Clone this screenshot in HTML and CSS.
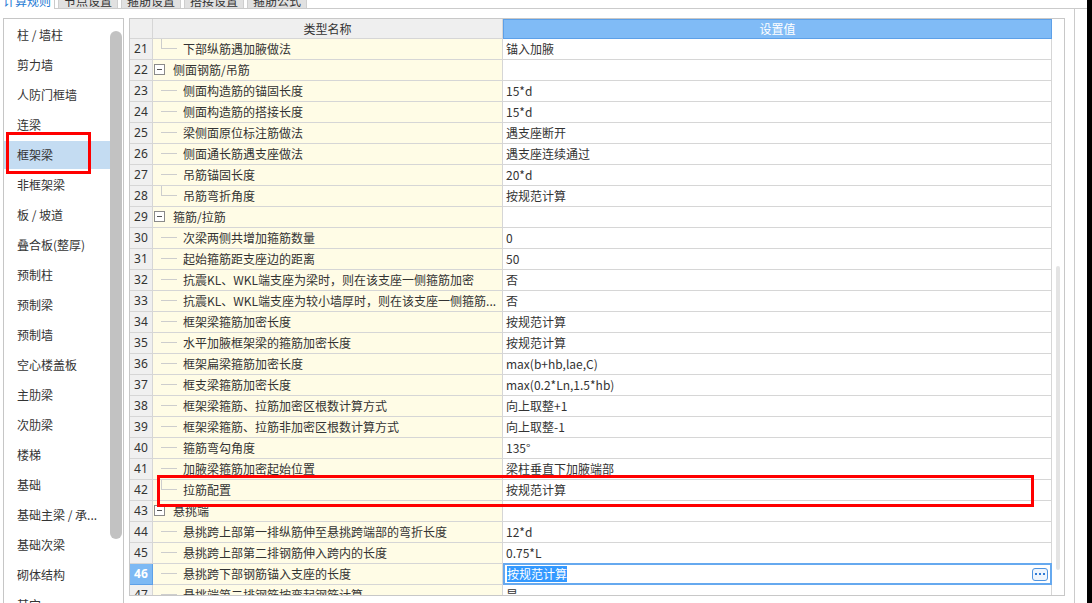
FILE: index.html
```html
<!DOCTYPE html>
<html lang="zh-CN">
<head>
<meta charset="utf-8">
<title>计算规则</title>
<link rel="stylesheet" href="styles.css">
</head>
<body>
<div class="app">
  <div class="main">
    <div class="tabs">
      <div class="tab active">计算规则</div>
      <div class="tab">节点设置</div>
      <div class="tab">箍筋设置</div>
      <div class="tab">搭接设置</div>
      <div class="tab">箍筋公式</div>
    </div>
    <div class="panel">
      <div class="sidebar">
        <ul class="list">
          <li class="item">柱 / 墙柱</li>
          <li class="item">剪力墙</li>
          <li class="item">人防门框墙</li>
          <li class="item">连梁</li>
          <li class="item selected">框架梁</li>
          <li class="item">非框架梁</li>
          <li class="item">板 / 坡道</li>
          <li class="item">叠合板(整厚)</li>
          <li class="item">预制柱</li>
          <li class="item">预制梁</li>
          <li class="item">预制墙</li>
          <li class="item">空心楼盖板</li>
          <li class="item">主肋梁</li>
          <li class="item">次肋梁</li>
          <li class="item">楼梯</li>
          <li class="item">基础</li>
          <li class="item">基础主梁 / 承...</li>
          <li class="item">基础次梁</li>
          <li class="item">砌体结构</li>
          <li class="item">其它</li>
        </ul>
        <div class="vtrack"><div class="vthumb"></div></div>
        <div class="mark mark-side"></div>
      </div>

      <div class="grid">
        <div class="table">
          <div class="row head">
            <div class="num"></div>
            <div class="name hname">类型名称</div>
            <div class="val hval">设置值</div>
          </div>
          <div class="row"><div class="num">21</div><div class="name"><span class="tree last"></span><span class="txt">下部纵筋遇加腋做法</span></div><div class="val">锚入加腋</div></div>
          <div class="row"><div class="num">22</div><div class="name"><span class="box"></span><span class="txt">侧面钢筋/吊筋</span></div><div class="val"></div></div>
          <div class="row"><div class="num">23</div><div class="name"><span class="tree"></span><span class="txt">侧面构造筋的锚固长度</span></div><div class="val">15*d</div></div>
          <div class="row"><div class="num">24</div><div class="name"><span class="tree"></span><span class="txt">侧面构造筋的搭接长度</span></div><div class="val">15*d</div></div>
          <div class="row"><div class="num">25</div><div class="name"><span class="tree"></span><span class="txt">梁侧面原位标注筋做法</span></div><div class="val">遇支座断开</div></div>
          <div class="row"><div class="num">26</div><div class="name"><span class="tree"></span><span class="txt">侧面通长筋遇支座做法</span></div><div class="val">遇支座连续通过</div></div>
          <div class="row"><div class="num">27</div><div class="name"><span class="tree"></span><span class="txt">吊筋锚固长度</span></div><div class="val">20*d</div></div>
          <div class="row"><div class="num">28</div><div class="name"><span class="tree last"></span><span class="txt">吊筋弯折角度</span></div><div class="val">按规范计算</div></div>
          <div class="row"><div class="num">29</div><div class="name"><span class="box"></span><span class="txt">箍筋/拉筋</span></div><div class="val"></div></div>
          <div class="row"><div class="num">30</div><div class="name"><span class="tree"></span><span class="txt">次梁两侧共增加箍筋数量</span></div><div class="val">0</div></div>
          <div class="row"><div class="num">31</div><div class="name"><span class="tree"></span><span class="txt">起始箍筋距支座边的距离</span></div><div class="val">50</div></div>
          <div class="row"><div class="num">32</div><div class="name"><span class="tree"></span><span class="txt">抗震KL、WKL端支座为梁时，则在该支座一侧箍筋加密</span></div><div class="val">否</div></div>
          <div class="row"><div class="num">33</div><div class="name"><span class="tree"></span><span class="txt">抗震KL、WKL端支座为较小墙厚时，则在该支座一侧箍筋...</span></div><div class="val">否</div></div>
          <div class="row"><div class="num">34</div><div class="name"><span class="tree"></span><span class="txt">框架梁箍筋加密长度</span></div><div class="val">按规范计算</div></div>
          <div class="row"><div class="num">35</div><div class="name"><span class="tree"></span><span class="txt">水平加腋框架梁的箍筋加密长度</span></div><div class="val">按规范计算</div></div>
          <div class="row"><div class="num">36</div><div class="name"><span class="tree"></span><span class="txt">框架扁梁箍筋加密长度</span></div><div class="val">max(b+hb,lae,C)</div></div>
          <div class="row"><div class="num">37</div><div class="name"><span class="tree"></span><span class="txt">框支梁箍筋加密长度</span></div><div class="val">max(0.2*Ln,1.5*hb)</div></div>
          <div class="row"><div class="num">38</div><div class="name"><span class="tree"></span><span class="txt">框架梁箍筋、拉筋加密区根数计算方式</span></div><div class="val">向上取整+1</div></div>
          <div class="row"><div class="num">39</div><div class="name"><span class="tree"></span><span class="txt">框架梁箍筋、拉筋非加密区根数计算方式</span></div><div class="val">向上取整-1</div></div>
          <div class="row"><div class="num">40</div><div class="name"><span class="tree"></span><span class="txt">箍筋弯勾角度</span></div><div class="val">135°</div></div>
          <div class="row"><div class="num">41</div><div class="name"><span class="tree"></span><span class="txt">加腋梁箍筋加密起始位置</span></div><div class="val">梁柱垂直下加腋端部</div></div>
          <div class="row"><div class="num">42</div><div class="name"><span class="tree last"></span><span class="txt">拉筋配置</span></div><div class="val">按规范计算</div></div>
          <div class="row"><div class="num">43</div><div class="name"><span class="box"></span><span class="txt">悬挑端</span></div><div class="val"></div></div>
          <div class="row"><div class="num">44</div><div class="name"><span class="tree"></span><span class="txt">悬挑跨上部第一排纵筋伸至悬挑跨端部的弯折长度</span></div><div class="val">12*d</div></div>
          <div class="row"><div class="num">45</div><div class="name"><span class="tree"></span><span class="txt">悬挑跨上部第二排钢筋伸入跨内的长度</span></div><div class="val">0.75*L</div></div>
          <div class="row current"><div class="num">46</div><div class="name"><span class="tree"></span><span class="txt">悬挑跨下部钢筋锚入支座的长度</span></div><div class="val"><div class="editor"><span class="sel">按规范计算</span><span class="more"><i></i><i></i><i></i></span></div></div></div>
          <div class="row"><div class="num">47</div><div class="name"><span class="tree"></span><span class="txt">悬挑端第二排钢筋按弯起钢筋计算</span></div><div class="val">是</div></div>
        </div>
        <div class="gtrack"><div class="gthumb"></div></div>
        <div class="mark mark-row"></div>
      </div>
    </div>
  </div>
  <div class="edge"></div>
</div>
</body>
</html>
```

FILE: styles.css
```css
* { box-sizing: border-box; }
html, body {
  margin: 0;
  padding: 0;
  background: #fff;
}
body {
  width: 1092px;
  height: 603px;
  overflow: hidden;
  font-family: "Noto Sans CJK SC", "Microsoft YaHei", sans-serif;
  font-size: 12px;
  color: #333;
}
.app {
  display: flex;
  width: 1092px;
  height: 603px;
}
.main {
  width: 1087px;
  height: 603px;
  overflow: hidden;
}
.edge {
  width: 5px;
  background: #000;
}

/* tabs */
.tabs {
  display: flex;
  align-items: flex-end;
  height: 9px;
  border-bottom: 1px solid #cbcbcb;
}
.tab {
  width: 60px;
  height: 16px;
  line-height: 14px;
  padding-top: 1px;
  margin-left: 3px;
  text-align: center;
  background: #e1e1e1;
  border: 1px solid #cfcfcf;
  border-bottom: none;
  color: #333;
  white-space: nowrap;
  overflow: hidden;
}
.tab.active {
  width: 55px;
  margin-left: 0;
  height: 17px;
  margin-bottom: -1px;
  padding-top: 2px;
  background: #fff;
  border: none;
  border-right: 1px solid #cbcbcb;
  color: #1f7bd4;
  position: relative;
  z-index: 1;
}

/* panel */
.panel {
  display: flex;
  align-items: flex-start;
  margin-right: 12px;
  height: 594px;
  padding-top: 9px;
  border-right: 1px solid #cbcbcb;
  overflow: hidden;
}

/* sidebar */
.sidebar {
  position: relative;
  display: flex;
  margin-left: 3px;
  width: 121px;
  height: 640px;
  border: 1px solid #c6c6c6;
  background: #fff;
  flex: none;
}
.list {
  list-style: none;
  margin: 0;
  padding: 1px 0 0 0;
  width: 106px;
}
.item {
  height: 30px;
  line-height: 28px;
  padding-left: 13px;
  border-top: 1px solid transparent;
  border-bottom: 1px solid transparent;
  background-clip: padding-box;
  white-space: nowrap;
  overflow: hidden;
  color: #333;
}
.item.selected {
  background-color: #c4dcf2;
}
.vtrack {
  width: 13px;
  padding-top: 12px;
}
.vthumb {
  width: 12px;
  height: 508px;
  background: #c2c2c2;
  border-radius: 6px;
}

/* red marks */
.mark {
  position: absolute;
  border: 3px solid #f00;
  pointer-events: none;
  z-index: 5;
}
.mark-side {
  left: 2px;
  top: 113px;
  width: 85px;
  height: 42px;
}
.mark-row {
  left: 27px;
  top: 456px;
  width: 877px;
  height: 32px;
}

/* grid */
.grid {
  position: relative;
  display: flex;
  margin-left: 5px;
  width: 936px;
  height: 578px;
  border: 1px solid #c8c8c8;
  overflow: hidden;
  flex: none;
}
.table {
  width: 922px;
}
.row {
  display: flex;
  height: 21px;
}
.row.head {
  height: 20px;
}
.num, .name, .val {
  border-right: 1px solid #d6d6d6;
  border-bottom: 1px solid #d6d6d6;
  white-space: nowrap;
  overflow: hidden;
}
.num {
  width: 23px;
  background: #f0f0f0;
  text-align: center;
  line-height: 20px;
  font-family: "Noto Sans", "Noto Sans CJK SC", sans-serif;
  font-size: 12px;
  letter-spacing: 0.2px;
}
.name {
  width: 350px;
  background: #fffce6;
  display: flex;
  align-items: flex-start;
}
.txt {
  line-height: 20px;
}
.val {
  width: 549px;
  background: #fff;
  padding-left: 3px;
  line-height: 20px;
  position: relative;
  overflow: visible;
}
.head .num, .hname {
  background: #efefef;
}
.hname {
  justify-content: center;
  line-height: 19px;
}
.hval {
  background: #80bbf6;
  border: 1px solid #5da0e8;
  color: #fff;
  text-align: center;
  line-height: 17px;
  padding-left: 0;
}

/* tree decorations */
.tree {
  flex: none;
  width: 16px;
  height: 10px;
  margin-left: 8px;
  margin-right: 6px;
  border-bottom: 1px solid #cdcdcd;
}
.tree.last {
  border-left: 1px solid #cdcdcd;
}
.box {
  flex: none;
  width: 11px;
  height: 11px;
  margin: 4px 8px 0 1px;
  border: 1px solid #8a8a8a;
  background: #fff;
  display: flex;
  align-items: center;
  justify-content: center;
}
.box::before {
  content: "";
  width: 5px;
  height: 1px;
  background: #555;
}

/* current row */
.current .num {
  background: #7db9f4;
  color: #fff;
  font-weight: bold;
  border-color: #5da0e8;
}
.editor {
  position: absolute;
  left: 0;
  top: -1px;
  right: -1px;
  bottom: -1px;
  border: 2px solid #66a9ef;
  display: flex;
  align-items: center;
  padding-left: 2px;
  background: #fff;
}
.sel {
  background: #3399ff;
  color: #fff;
  line-height: 16px;
}
.more {
  margin-left: auto;
  margin-right: 2px;
  width: 16px;
  height: 13px;
  border: 1px solid #4f94e0;
  border-radius: 3px;
  background: #eef5fd;
  display: flex;
  align-items: center;
  justify-content: center;
  gap: 2px;
}
.more i {
  display: block;
  width: 2px;
  height: 2px;
  background: #2f7bd6;
}

/* grid scrollbar */
.gtrack {
  width: 12px;
  padding-top: 247px;
  padding-left: 4px;
}
.gthumb {
  width: 4px;
  height: 304px;
  background: #e4e4e4;
  border-radius: 2px;
}
```
